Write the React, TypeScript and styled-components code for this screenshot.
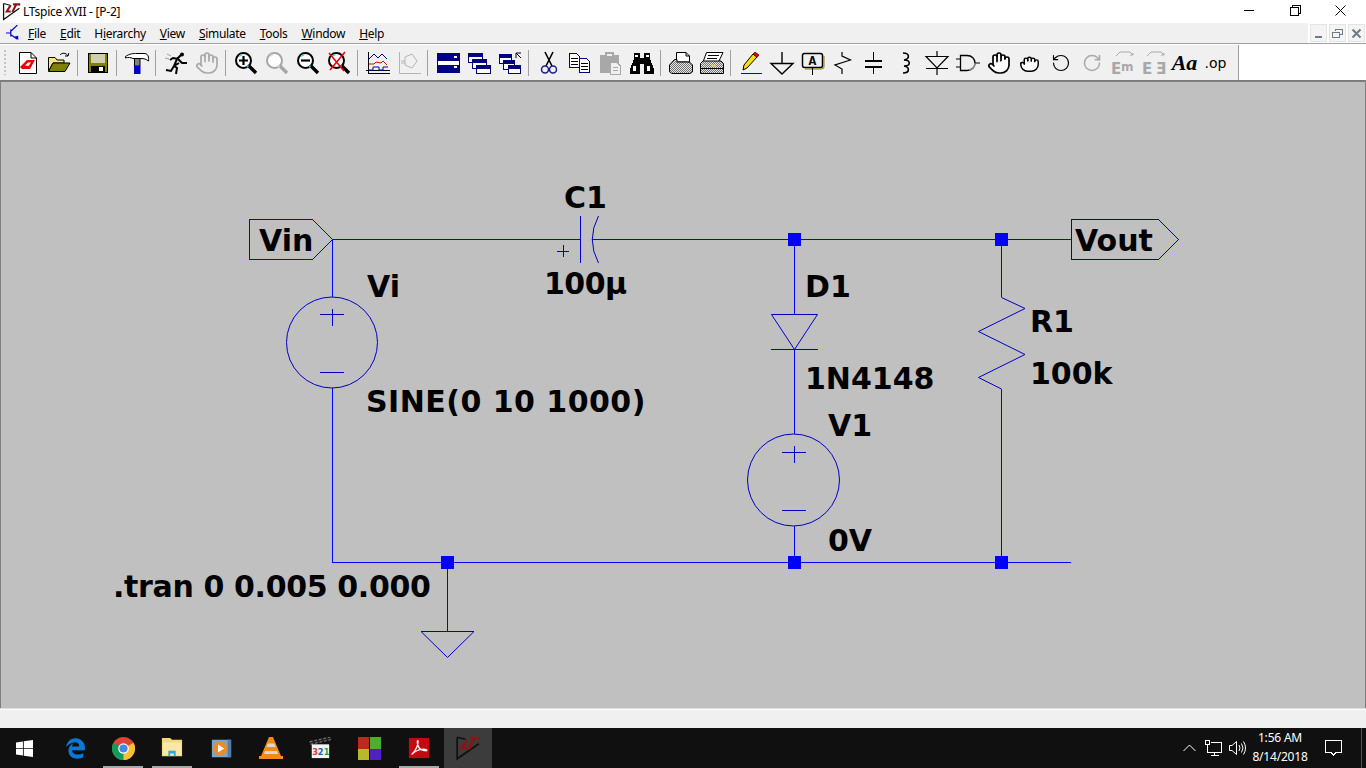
import React from 'react';
import styled, {createGlobalStyle} from "styled-components";
import {Hand, Grab, RotateCcw, RotateCw} from "lucide-react";
import {FaEdgeLegacy} from "react-icons/fa6";

const GlobalStyle = createGlobalStyle`
    html, body {
        margin: 0;
        padding: 0;
        overflow: hidden;
        background: #ffffff;
        font-family: "Noto Sans", "Open Sans", sans-serif;
    }
`

const WIRE = "#0000ff"
const SYMBOL = "#0000c4"

const menuItems = [
    {before: "", key: "F", after: "ile"},
    {before: "", key: "E", after: "dit"},
    {before: "H", key: "i", after: "erarchy"},
    {before: "", key: "V", after: "iew"},
    {before: "", key: "S", after: "imulate"},
    {before: "", key: "T", after: "ools"},
    {before: "", key: "W", after: "indow"},
    {before: "", key: "H", after: "elp"},
]

const labels = [
    {x: 259, y: 251, text: "Vin"},
    {x: 1075, y: 251, text: "Vout"},
    {x: 367, y: 297, text: "Vi"},
    {x: 564, y: 208, text: "C1"},
    {x: 544, y: 294, text: "100µ", tracking: -0.5},
    {x: 366, y: 412, text: "SINE(0 10 1000)", tracking: 0.47},
    {x: 805, y: 297, text: "D1"},
    {x: 805, y: 389, text: "1N4148"},
    {x: 828, y: 436, text: "V1"},
    {x: 828, y: 551, text: "0V"},
    {x: 1030, y: 332, text: "R1"},
    {x: 1030, y: 384, text: "100k"},
    {x: 113, y: 597, text: ".tran 0 0.005 0.000", tracking: -0.35},
]

const junctions = [[794, 239], [1001, 239], [447, 562], [794, 562], [1001, 562]]

const ToolText = styled.span<{$serif?: boolean}>`
    font-family: ${p => p.$serif ? '"Liberation Serif", serif' : '"DejaVu Sans", sans-serif'};
    font-size: ${p => p.$serif ? "22px" : "14px"};
    font-weight: ${p => p.$serif ? 700 : 400};
    font-style: ${p => p.$serif ? "italic" : "normal"};
    color: #000;
    line-height: 24px;
`

const LtLogo = ({size}: {size: number}) => (
    <svg width={size} height={size} viewBox="0 0 24 24">
        <path d="M2 2 L2 22 L22 8" fill="none" stroke="#111" strokeWidth="1.6"/>
        <path d="M2 2 L10 4" fill="none" stroke="#111" strokeWidth="1.4"/>
        <path d="M11 4 L6 12 L11 12 M14 3 L23 3 M18 3 L13 13" fill="none" stroke="#8c1414" strokeWidth="2.6"/>
    </svg>
)

const MagGlass = ({stroke = "#000", children}: {stroke?: string; children?: React.ReactNode}) => (
    <>
        <circle cx="9.5" cy="9.5" r="7.5" fill="#fff" stroke={stroke} strokeWidth="2"/>
        <path d="M5 5 L8 3.5 M15 15 L13 16" stroke={stroke === "#000" ? "#35d0d8" : "#d8d8d8"} strokeWidth="1.4"/>
        <path d="M15 15 L22 22" stroke={stroke} strokeWidth="3.4"/>
        {children}
    </>
)

const MiniWindow = ({x, y, w, h = 7}: {x: number; y: number; w: number; h?: number}) => (
    <g shapeRendering="crispEdges">
        <rect x={x + .5} y={y + .5} width={w} height={h} fill="#fff" stroke="#000080"/>
        <rect x={x + .5} y={y + .5} width={w} height={2.5} fill="#000080" stroke="#000080"/>
    </g>
)

const Sheet = ({x, y}: {x: number; y: number}) => (
    <g shapeRendering="crispEdges">
        <path d={`M${x + .5} ${y + .5} h7 l3 3 v11 h-10 z`} fill="#fff" stroke="#000080"/>
        <path d={`M${x + 2} ${y + 5.5} h7 M${x + 2} ${y + 8.5} h7 M${x + 2} ${y + 11.5} h7`} stroke="#000"/>
    </g>
)

const HandIcon = ({color = "#000", Shape = Hand, size = 24}: {color?: string; Shape?: typeof Hand; size?: number}) => (
    <Shape style={{width: size, height: size}} color={color} fill={color === "#000" ? "#fff" : "none"} strokeWidth={1.7}/>
)

const Dither = ({id}: {id: string}) => (
    <defs>
        <pattern id={id} width="2" height="2" patternUnits="userSpaceOnUse">
            <rect width="2" height="2" fill="#e8e8e8"/>
            <rect width="1" height="1" fill="#707070"/>
            <rect x="1" y="1" width="1" height="1" fill="#707070"/>
        </pattern>
    </defs>
)

const tools: (React.ReactNode | "sep")[] = [
    // new
    <svg viewBox="0 0 24 24" key="new">
        <path d="M3.5 1.5 H15 L20.5 7 V22.5 H3.5 Z" fill="#fff" stroke="#000"/>
        <path d="M15 1.5 V7 H20.5" fill="none" stroke="#000"/>
        <path d="M4 16 L11 9 H19 L14 18 H6 Z" fill="#f00000"/>
        <path d="M9 14.5 L12 11.5 H15 L12.5 15 Z" fill="#fff"/>
    </svg>,
    // open
    <svg viewBox="0 0 24 24" key="open">
        <path d="M1.5 6.5 H8 L10 9 H17 V12 H6 L1.5 20 Z" fill="#f4e87a" stroke="#000"/>
        <path d="M1.5 20.5 L6 12 H23 L18 20.5 Z" fill="#808000" stroke="#000"/>
        <path d="M13 4 C15 1.5 19 1.5 21 5 M21 5 L18 5 M21 5 L21.8 2" fill="none" stroke="#000"/>
    </svg>,
    "sep",
    // save
    <svg viewBox="0 0 24 24" key="save" shapeRendering="crispEdges">
        <rect x="2.5" y="2.5" width="19" height="19" fill="#808000" stroke="#000"/>
        <rect x="5" y="3" width="14" height="9" fill="#cfcfb0"/>
        <rect x="5" y="15" width="14" height="6" fill="#000"/>
        <rect x="13" y="16" width="4" height="4" fill="#fff"/>
    </svg>,
    "sep",
    // hammer
    <svg viewBox="0 0 24 24" key="hammer">
        <path d="M0.5 5.5 C5 2.5 8 2.5 12 2.5 H20 C23 3 24 6 23.5 10 C21 8 19 7.5 16 7.5 H8 C6 6.5 3 6 0.5 7 Z" fill="#fff" stroke="#000"/>
        <path d="M9.5 7.5 H15 V15 H9.5 Z" fill="#808080" stroke="#000"/>
        <rect x="9" y="15" width="6.5" height="8" fill="#0000c8"/>
    </svg>,
    "sep",
    // run
    <svg viewBox="0 0 24 24" key="run">
        <path d="M2 19 L7 20 L10 15 L13 17 L12 23 M10 15 L13 8 M6 9 L9 7 L14 8 L18 12 L23 12 M13 8 L17 4 M10 15 L15 12" fill="none" stroke="#000" strokeWidth="2"/>
        <circle cx="18" cy="3.5" r="2" fill="#000"/>
        <path d="M3 3 L7 5 M1 7 L5 8" stroke="#a0a0a0"/>
    </svg>,
    // hand disabled
    <HandIcon key="hand0" color="#a8a8a8"/>,
    "sep",
    <svg viewBox="0 0 24 24" key="zin">
        <MagGlass><path d="M5 9.5 H14 M9.5 5 V14" stroke="#000" strokeWidth="2.2"/></MagGlass>
    </svg>,
    <svg viewBox="0 0 24 24" key="zfit">
        <MagGlass stroke="#a6a6a6"/>
    </svg>,
    <svg viewBox="0 0 24 24" key="zout">
        <MagGlass><path d="M5 9.5 H14" stroke="#000" strokeWidth="2.2"/></MagGlass>
    </svg>,
    <svg viewBox="0 0 24 24" key="zcancel">
        <MagGlass/>
        <path d="M2 2 L17 20 M18 1 L3 19" stroke="#f00000" strokeWidth="1.6"/>
    </svg>,
    "sep",
    // waveform
    <svg viewBox="0 0 24 24" key="wave">
        <path d="M2.5 1 V22.5 H24 M0 19.5 H24" fill="none" stroke="#000" shapeRendering="crispEdges"/>
        <path d="M3 8 L8 3 L12 7 L16 3 L21 8" fill="none" stroke="#000080"/>
        <path d="M3 13 L8 13 L10 11 L15 12 L17 10 L21 14" fill="none" stroke="#e00000"/>
        <path d="M3 19 H7 V16 H13 V19 H17 V16 H22" fill="none" stroke="#0000d0"/>
    </svg>,
    <svg viewBox="0 0 24 24" key="wavegrey">
        <path d="M2.5 1 V22.5 H24 M8 6 L15 3 L20 10 L15 17 L8 14 Z M4 10 H8 M4 12 H8" fill="none" stroke="#b4b4b4"/>
    </svg>,
    "sep",
    // tile
    <svg viewBox="0 0 24 24" key="tile" shapeRendering="crispEdges">
        <rect x="1.5" y="2.5" width="22" height="19" fill="#fff" stroke="#000080"/>
        <rect x="2" y="3" width="21" height="7" fill="#000080"/>
        <rect x="2" y="14" width="21" height="7" fill="#000080"/>
        <rect x="18" y="5" width="3" height="2" fill="#fff"/>
        <rect x="18" y="15" width="3" height="2" fill="#fff"/>
    </svg>,
    <svg viewBox="0 0 24 24" key="cascade">
        <MiniWindow x={1} y={2} w={14} h={9}/>
        <MiniWindow x={5} y={8} w={14} h={9}/>
        <MiniWindow x={9} y={14} w={14} h={8}/>
    </svg>,
    <svg viewBox="0 0 24 24" key="arrange">
        <MiniWindow x={1} y={3} w={12} h={9}/>
        <MiniWindow x={5} y={9} w={11} h={9}/>
        <MiniWindow x={10} y={14} w={12} h={8}/>
        <path d="M18 2 H23 M18 2 V7 M18 2 L23 7" stroke="#000" fill="none"/>
    </svg>,
    "sep",
    // scissors
    <svg viewBox="0 0 24 24" key="cut">
        <path d="M8 1 L15 15 M16 1 L9 15" stroke="#000" strokeWidth="1.6"/>
        <circle cx="8" cy="18.5" r="3.5" fill="none" stroke="#1c1c90" strokeWidth="1.5"/>
        <circle cx="16" cy="18.5" r="3.5" fill="none" stroke="#1c1c90" strokeWidth="1.5"/>
    </svg>,
    <svg viewBox="0 0 24 24" key="copy">
        <Sheet x={1} y={2}/>
        <Sheet x={11} y={7}/>
    </svg>,
    <svg viewBox="0 0 24 24" key="paste" shapeRendering="crispEdges">
        <rect x="1" y="4" width="19" height="18" fill="#a8a8a8"/>
        <rect x="6" y="1" width="9" height="5" fill="#a8a8a8"/>
        <rect x="8" y="3" width="5" height="2" fill="#f0f0f0"/>
        <path d="M11.5 11.5 H18 L21.5 15 V23.5 H11.5 Z" fill="#f0f0f0" stroke="#a8a8a8"/>
        <path d="M14 16.5 H19 M14 19.5 H19" stroke="#a8a8a8"/>
    </svg>,
    <svg viewBox="0 0 24 24" key="find" shapeRendering="crispEdges">
        <path d="M4 2 H10 V7 H14 V2 H20 V8 L24 18 V23 H14 V13 H10 V23 H0 V18 L4 8 Z" fill="#000"/>
        <rect x="5" y="4" width="3" height="2" fill="#fff"/>
        <rect x="16" y="4" width="3" height="2" fill="#fff"/>
        <rect x="3" y="15" width="3" height="5" fill="#fff"/>
        <rect x="17" y="15" width="3" height="5" fill="#fff"/>
    </svg>,
    "sep",
    // print
    <svg viewBox="0 0 24 24" key="print">
        <Dither id="printDither"/>
        <path d="M7.5 1.5 H17 L20.5 5 V11 H7.5 Z" fill="#fff" stroke="#000"/>
        <path d="M17 1.5 V5 H20.5" fill="none" stroke="#000"/>
        <path d="M5.5 8.5 H8 V11 H20.5 L23.5 14 V20 C23.5 21.5 22 22.5 20 22.5 H4 C2 22.5 .5 21.5 .5 20 V14 Z" fill="url(#printDither)" stroke="#000"/>
    </svg>,
    <svg viewBox="0 0 24 24" key="printer">
        <Dither id="printerDither"/>
        <path d="M6.5 1.5 H23 L18.5 11 H3 Z" fill="#fff" stroke="#000"/>
        <path d="M8 4.5 H19 M7 7.5 H17" stroke="#000"/>
        <path d="M.5 12.5 L3 10 H21 L23.5 12.5 V22.5 H.5 Z" fill="url(#printerDither)" stroke="#000"/>
        <path d="M.5 17.5 H23.5" stroke="#000"/>
        <rect x="11" y="13.5" width="5" height="2" fill="#e8d040"/>
    </svg>,
    "sep",
    // pencil
    <svg viewBox="0 0 24 24" key="pencil">
        <path d="M8 17 L4 19 L5 14 L14 3 L18 6 Z" fill="#f8e000" stroke="#000"/>
        <path d="M14 3 L16 1 L20 4 L18 6.5 Z" fill="#f00000" stroke="#000" strokeWidth=".6"/>
        <path d="M2 22.5 H23" stroke="#0000e0" shapeRendering="crispEdges"/>
    </svg>,
    // ground
    <svg viewBox="0 0 24 24" key="ground">
        <path d="M12 1 V12 M1 12.5 H23 L12 23 Z" fill="none" stroke="#000" strokeWidth="1.4"/>
    </svg>,
    // label
    <svg viewBox="0 0 24 24" key="label">
        <rect x="1.5" y="2.5" width="20" height="14" rx="2" fill="none" stroke="#000" strokeWidth="1.5"/>
        <path d="M23 5 V16 Q23 18 20 18 H4" fill="none" stroke="#808000"/>
        <text x="11.5" y="14" textAnchor="middle" fontFamily="Liberation Mono" fontWeight="700" fontSize="13">A</text>
        <path d="M11.5 17 V24" stroke="#000" shapeRendering="crispEdges"/>
    </svg>,
    // resistor
    <svg viewBox="0 0 24 24" key="res">
        <path d="M10 1 V5 L18.5 9 L3 14 L10 18 V23" fill="none" stroke="#000" strokeWidth="1.2"/>
    </svg>,
    // capacitor
    <svg viewBox="0 0 24 24" key="cap" shapeRendering="crispEdges">
        <path d="M10.5 1 V9 M10.5 17 V23" stroke="#000"/>
        <rect x="2" y="9" width="17" height="2" fill="#000"/>
        <rect x="2" y="15" width="17" height="2" fill="#000"/>
    </svg>,
    // inductor
    <svg viewBox="0 0 24 24" key="ind">
        <path d="M9 2 C16 2 16 8 10 9 C17 9 17 15 10 15 C16 16 16 22 9 22" fill="none" stroke="#000" strokeWidth="1.6"/>
    </svg>,
    // diode
    <svg viewBox="0 0 24 24" key="diode">
        <path d="M12 0 V5 M1 5.5 H23 L12 17 Z M1 17.5 H23 M12 17 V24" fill="none" stroke="#000" strokeWidth="1.2"/>
    </svg>,
    // gate
    <svg viewBox="0 0 24 24" key="gate">
        <path d="M0 8 H4 M0 16 H4 M19 12 H24" stroke="#000"/>
        <path d="M4.5 4.5 H11 C16 4.5 19 8 19 12 C19 16 16 19.5 11 19.5 H4.5 Z" fill="none" stroke="#000" strokeWidth="1.3"/>
        <path d="M13 19 C17 18 19 15 19 12" fill="none" stroke="#909090" strokeWidth="1.3"/>
    </svg>,
    <HandIcon key="hand1"/>,
    <HandIcon key="hand2" Shape={Grab} size={21}/>,
    <RotateCcw key="undo" style={{width: 20, height: 20}} color="#000" strokeWidth={1.4}/>,
    <RotateCw key="redo" style={{width: 20, height: 20}} color="#a8a8a8" strokeWidth={1.8}/>,
    // duplicate / move label
    <svg viewBox="0 0 24 24" key="em">
        <path d="M5 5 L9 1 H19 L22 4 M22 4 H19 M22 4 V2" fill="none" stroke="#a8a8a8"/>
        <text x="0" y="23" fontFamily="DejaVu Sans" fontWeight="700" fontSize="15" fill="#a8a8a8">E</text>
        <text x="10" y="20" fontFamily="DejaVu Sans" fontWeight="700" fontSize="12" fill="#a8a8a8">m</text>
    </svg>,
    <svg viewBox="0 0 24 24" key="ee">
        <path d="M5 5 L9 1 H19 L22 4 M22 4 H19 M22 4 V2" fill="none" stroke="#a8a8a8"/>
        <text x="0" y="23" fontFamily="DejaVu Sans" fontWeight="700" fontSize="15" fill="#a8a8a8">E</text>
        <text x="14" y="23" fontFamily="DejaVu Sans" fontWeight="700" fontSize="15" fill="#a8a8a8">Ǝ</text>
    </svg>,
    <ToolText key="aa" $serif>Aa</ToolText>,
    <ToolText key="op">.op</ToolText>,
]

const Schematic = () => (
    <SheetView width="1366" height="627" viewBox="0 81 1366 627">
        <g fill="none" stroke={WIRE} shapeRendering="crispEdges">
            <path d="M332.5 239.5 H580 M592 239.5 H1071"/>
            <path d="M332.5 239.5 V297 M332.5 388 V562.5 H1071"/>
            <path d="M794.5 239.5 V314 M794.5 349 V434 M794.5 526 V562"/>
            <path d="M1001.5 239.5 V297 M1001.5 389 V562"/>
            <path d="M447.5 562 V631"/>
        </g>
        <g fill="none" stroke={SYMBOL}>
            <path d="M249.5 219.5 H312.5 L332.5 239.5 L312.5 259.5 H249.5 Z" stroke={WIRE} shapeRendering="crispEdges"/>
            <path d="M1071.5 219.5 H1158.5 L1178.5 239.5 L1158.5 259.5 H1071.5 Z" shapeRendering="crispEdges"/>
            <path d="M580.5 216 V263" shapeRendering="crispEdges"/>
            <path d="M598.5 216 Q586 239.5 598.5 263"/>
            <path d="M557 251.5 H569 M563.5 245 V257" shapeRendering="crispEdges"/>
            <circle cx="332" cy="342.5" r="45.5"/>
            <path d="M320 314.5 H344 M332.5 309 V326 M320 372.5 H344" shapeRendering="crispEdges"/>
            <circle cx="793.5" cy="480" r="46"/>
            <path d="M782 452.5 H806 M794.5 446 V463 M782 510.5 H806" shapeRendering="crispEdges"/>
            <path d="M771.5 314.5 H817.5 L794.5 349.5 Z"/>
            <path d="M771 349.5 H818" shapeRendering="crispEdges"/>
            <path d="M1001.5 297.5 L1025 308.5 L978.5 331.5 L1025 354.5 L978.5 377.5 L1001.5 389"/>
            <path d="M421 631.5 H474 L447.5 657.5 Z"/>
        </g>
        <g fill={WIRE} shapeRendering="crispEdges">
            {junctions.map(([x, y]) => <rect key={`${x}-${y}`} x={x - 6} y={y - 6} width="13" height="13"/>)}
        </g>
        {labels.map(label => (
            <NetLabel key={label.text} x={label.x} y={label.y} $tracking={label.tracking ?? 0}>{label.text}</NetLabel>
        ))}
    </SheetView>
)

const taskIcons = [
    <svg viewBox="0 0 24 24" key="chrome" width="23" height="23">
        <circle cx="12" cy="12" r="12" fill="#dc4437"/>
        <path d="M12 12 L1.6 6 A12 12 0 0 0 12 24 Z" fill="#0f9d58"/>
        <path d="M12 12 L12 24 A12 12 0 0 0 22.4 6 Z" fill="#fbc02d"/>
        <circle cx="12" cy="12" r="5.5" fill="#fff"/>
        <circle cx="12" cy="12" r="4.3" fill="#4a86e8"/>
    </svg>,
    <svg viewBox="0 0 24 24" key="folder" width="22" height="22">
        <path d="M1 1 H10 L12 3 H23 V21 H1 Z" fill="#f6d77a"/>
        <rect x="2" y="6" width="20" height="14" fill="#fbe8a6"/>
        <path d="M8 21 V15 H16 V21 H14 V18 H10 V21 Z" fill="#29a8e6"/>
    </svg>,
    <svg viewBox="0 0 24 24" key="media" width="21" height="21">
        <rect x="1" y="2" width="22" height="20" fill="#7aa6cc"/>
        <rect x="19" y="2" width="4" height="20" fill="#4f7fa8"/>
        <circle cx="10.5" cy="12" r="8" fill="#f08a24"/>
        <path d="M8 7.5 L15 12 L8 16.5 Z" fill="#fff"/>
    </svg>,
    <svg viewBox="0 0 24 24" key="vlc" width="24" height="24">
        <path d="M10 1 H14 L22 20 H24 V23 H0 V20 H2 Z" fill="#f08a18"/>
        <path d="M8.6 7.5 H15.4 L16.6 11 H7.4 Z M6 15 H18 L19 18 H5 Z" fill="#d8d8d8"/>
    </svg>,
    <svg viewBox="0 0 24 24" key="clapper" width="22" height="22">
        <path d="M1 5 L23 0 L23.5 3 L1.5 8 Z" fill="#222" stroke="#ddd" strokeWidth=".6" strokeDasharray="3 2"/>
        <rect x="3" y="8" width="19" height="15" fill="#f4f4f4"/>
        <text x="3.5" y="20" fontFamily="DejaVu Sans" fontWeight="700" fontSize="9" fill="#d04020">3</text>
        <text x="9.5" y="20" fontFamily="DejaVu Sans" fontWeight="700" fontSize="9" fill="#2060c0">2</text>
        <text x="16" y="20" fontFamily="DejaVu Sans" fontWeight="700" fontSize="9" fill="#20a040">1</text>
    </svg>,
    <svg viewBox="0 0 24 24" key="squares" width="23" height="23" shapeRendering="crispEdges">
        <rect x="0" y="0" width="11.5" height="12" fill="#b82c20"/>
        <rect x="12.5" y="0" width="11.5" height="12" fill="#4cae2c"/>
        <rect x="0" y="13" width="11.5" height="11" fill="#b8b82c"/>
        <rect x="12.5" y="13" width="11.5" height="11" fill="#5020c0"/>
    </svg>,
    <svg viewBox="0 0 24 24" key="acrobat" width="22" height="22">
        <rect x="1" y="1" width="22" height="22" fill="#c40a10"/>
        <path d="M4 19 C8 16 11 9 11 5 C11 3 9.5 4 10.5 8 C11.5 12 15 15 20 15 C22 14 19 13 15 13.5 C11 14 7 16 4 19 Z" fill="none" stroke="#fff" strokeWidth="1.4"/>
    </svg>,
]

// which task buttons have a running app under them
const runningIcons = ["chrome", "folder", "acrobat"]

export default function App() {
    return (
        <>
            <GlobalStyle/>
            <AppWindow>
                <TitleBar>
                    <TitleIcon><LtLogo size={19}/></TitleIcon>
                    <TitleText>LTspice XVII - [P-2]</TitleText>
                    <WindowControls>
                        <WindowButton>
                            <svg width="11" height="11"><path d="M0 5.5 H10" stroke="#000" shapeRendering="crispEdges"/></svg>
                        </WindowButton>
                        <WindowButton>
                            <svg width="11" height="11"><path d="M.5 2.5 H8.5 V10.5 H.5 Z M2.5 2 V.5 H10.5 V8.5 H9" fill="none" stroke="#000" shapeRendering="crispEdges"/></svg>
                        </WindowButton>
                        <WindowButton>
                            <svg width="11" height="11"><path d="M.5 .5 L10.5 10.5 M10.5 .5 L.5 10.5" stroke="#000"/></svg>
                        </WindowButton>
                    </WindowControls>
                </TitleBar>
                <MenuBar>
                    <MenuIcon>
                        <svg width="16" height="18" viewBox="0 0 16 18">
                            <path d="M5.5 5 V13 M5 9 H0 M13 0 L5.5 7 M5.5 11 L13 16" fill="none" stroke="#0000e0" strokeWidth="1.4"/>
                            <path d="M10 13 L14 17 L14 12 Z" fill="#0000e0"/>
                        </svg>
                    </MenuIcon>
                    {menuItems.map((item, i) => (
                        <MenuItem key={i}>{item.before}<u>{item.key}</u>{item.after}</MenuItem>
                    ))}
                    <ChildControls>
                        <ChildButton>
                            <svg width="11" height="11"><rect x="2" y="8" width="7" height="2" fill="#6d7a8a"/></svg>
                        </ChildButton>
                        <ChildButton>
                            <svg width="11" height="11"><path d="M.5 4.5 H7.5 V9.5 H.5 Z M3.5 3 V1.5 H10.5 V6.5 H8" fill="none" stroke="#6d7a8a" shapeRendering="crispEdges"/></svg>
                        </ChildButton>
                        <ChildButton>
                            <svg width="11" height="11"><path d="M1.5 1.5 L9.5 9.5 M9.5 1.5 L1.5 9.5" stroke="#6d7a8a" strokeWidth="2"/></svg>
                        </ChildButton>
                    </ChildControls>
                </MenuBar>
                <ToolRow>
                    <Toolbar>
                        <Gripper/>
                        {tools.map((tool, i) => tool === "sep"
                            ? <ToolSeparator key={i}/>
                            : <ToolButton key={i}>{tool}</ToolButton>)}
                    </Toolbar>
                </ToolRow>
                <Canvas>
                    <Schematic/>
                </Canvas>
                <StatusBar/>
                <Taskbar>
                    <StartButton>
                        <svg viewBox="0 0 24 24" width="17" height="17">
                            <path d="M0 3.4 L9.8 2 V11.5 H0 Z M11 1.8 L24 0 V11.5 H11 Z M0 12.7 H9.8 V22 L0 20.6 Z M11 12.7 H24 V24 L11 22.2 Z" fill="#fff"/>
                        </svg>
                    </StartButton>
                    <EdgeButton>
                        <FaEdgeLegacy size={21} color="#0a78d7"/>
                    </EdgeButton>
                    <TaskButtons>
                        {taskIcons.map(icon => (
                            <TaskButton key={icon.key} $running={runningIcons.includes(String(icon.key))}>{icon}</TaskButton>
                        ))}
                        <TaskButton $active><LtLogo size={26}/></TaskButton>
                    </TaskButtons>
                    <Tray>
                        <TrayIcon>
                            <svg width="13" height="8"><path d="M.5 7 L6.5 1 L12.5 7" fill="none" stroke="#fff"/></svg>
                        </TrayIcon>
                        <TrayIcon>
                            <svg width="17" height="16" shapeRendering="crispEdges">
                                <path d="M.5 .5 H4.5 V4.5 H.5 Z M2.5 4.5 V12.5 H16.5 M6 2.5 H16.5 V12.5 M9.5 12.5 V15 M6 15.5 H14" fill="none" stroke="#fff"/>
                            </svg>
                        </TrayIcon>
                        <TrayIcon>
                            <svg width="17" height="14">
                                <path d="M.5 4.5 H3 L7.5 .5 V13.5 L3 9.5 H.5 Z" fill="none" stroke="#fff"/>
                                <path d="M10 4 Q12 7 10 10 M12.5 2.5 Q15.5 7 12.5 11.5 M14.5 .5 Q18.5 7 14.5 13.5" fill="none" stroke="#fff"/>
                            </svg>
                        </TrayIcon>
                        <Clock>
                            <span>1:56 AM</span>
                            <span>8/14/2018</span>
                        </Clock>
                        <NotifyButton>
                            <svg width="17" height="16"><path d="M.5 .5 H16.5 V12.5 H11 L8.5 15 L6 12.5 H.5 Z" fill="none" stroke="#fff" shapeRendering="crispEdges"/></svg>
                        </NotifyButton>
                        <DesktopPeek/>
                    </Tray>
                </Taskbar>
            </AppWindow>
        </>
    );
}

const AppWindow = styled.div`
    width: 1366px;
    height: 768px;
    display: flex;
    flex-direction: column;
    overflow: hidden;
`

const TitleBar = styled.div`
    height: 23px;
    flex: none;
    display: flex;
    align-items: center;
    background: #ffffff;
`

const TitleIcon = styled.div`
    width: 23px;
    height: 23px;
    display: flex;
    align-items: center;
    justify-content: center;
`

const TitleText = styled.span`
    font-size: 12px;
    letter-spacing: -0.25px;
    color: #000;
`

const WindowControls = styled.div`
    margin-left: auto;
    display: flex;
    height: 23px;
    box-sizing: border-box;
    padding: 0 2.5px 2px 0;
`

const WindowButton = styled.div`
    width: 45.5px;
    display: flex;
    align-items: center;
    justify-content: center;
`

const MenuBar = styled.div`
    height: 20px;
    flex: none;
    display: flex;
    align-items: center;
    gap: 14px;
    background: #f0f0f0;
`

const MenuIcon = styled.div`
    width: 14px;
    margin-left: 6px;
    margin-right: -6px;
    display: flex;
`

const MenuItem = styled.span`
    font-size: 12px;
    letter-spacing: -0.3px;
    color: #000;
    white-space: nowrap;
`

const ChildControls = styled.div`
    margin-left: auto;
    height: 20px;
    padding: 1px 1px 1px 2px;
    box-sizing: border-box;
    display: flex;
    gap: 2px;
    background: #fff;
`

const ChildButton = styled.div`
    width: 17px;
    box-sizing: border-box;
    display: flex;
    align-items: center;
    justify-content: center;
    background: #f4f4f4;
    border: 1px solid #e4e4e4;
`

const ToolRow = styled.div`
    height: 38px;
    flex: none;
    box-sizing: border-box;
    display: flex;
    background: #fff;
    border-top: 1px solid #a0a0a0;
    border-bottom: 1px solid #7a7a7a;
`

const Toolbar = styled.div`
    width: 1239px;
    box-sizing: border-box;
    display: flex;
    align-items: center;
    padding-left: 12px;
    position: relative;
    background: #f0f0f0;
    border-right: 1px solid #a0a0a0;
    margin-top: 1px;
`

const Gripper = styled.div`
    position: absolute;
    left: 4px;
    top: 5px;
    bottom: 5px;
    width: 2px;
    background: repeating-linear-gradient(#c4c4c4 0 2px, transparent 2px 4px);
`

const ToolButton = styled.div`
    width: 31px;
    height: 24px;
    flex: none;
    display: flex;
    align-items: center;
    justify-content: center;

    svg {
        width: 24px;
        height: 24px;
        overflow: visible;
    }
`

const ToolSeparator = styled.div`
    width: 8px;
    height: 26px;
    flex: none;
    position: relative;

    &::after {
        content: "";
        position: absolute;
        left: 3px;
        top: 0;
        bottom: 0;
        width: 1px;
        background: #a0a0a0;
    }
`

const Canvas = styled.div`
    height: 627px;
    flex: none;
    background: #c0c0c0;
    box-shadow: inset 1px 1px 0 #808080, inset -1px 0 0 #808080;
`

const SheetView = styled.svg`
    display: block;
`

const NetLabel = styled.text<{$tracking: number}>`
    font-family: "DejaVu Sans", sans-serif;
    font-weight: 700;
    font-size: 30px;
    letter-spacing: ${p => p.$tracking}px;
    fill: #000;
`

const StatusBar = styled.div`
    height: 20px;
    flex: none;
    box-sizing: border-box;
    background: #f0f0f0;
    border-top: 1px solid #dcdcdc;
    box-shadow: inset 0 1px 0 #fff;
`

const Taskbar = styled.div`
    height: 40px;
    flex: none;
    display: flex;
    background: #101010;
`

const StartButton = styled.div`
    width: 48px;
    flex: none;
    display: flex;
    align-items: center;
    justify-content: center;
`

const EdgeButton = styled(StartButton)`
    width: 54px;
    margin-right: -3px;
`

const TaskButtons = styled.div`
    display: flex;
    gap: 1.25px;
`

const TaskButton = styled.div<{$active?: boolean; $running?: boolean}>`
    width: 48px;
    flex: none;
    display: flex;
    align-items: center;
    justify-content: center;
    position: relative;
    background: ${p => p.$active ? "#3c3c3c" : "transparent"};

    &::after {
        content: "";
        display: ${p => p.$running ? "block" : "none"};
        position: absolute;
        bottom: 0;
        left: 4px;
        right: 4px;
        height: 2px;
        background: #a8a8a8;
    }
`

const Tray = styled.div`
    margin-left: auto;
    display: flex;
    align-items: center;
    padding-right: 4px;
`

const TrayIcon = styled.div`
    width: 24px;
    display: flex;
    justify-content: center;
`

const Clock = styled.div`
    width: 62px;
    margin-top: -2px;
    display: flex;
    flex-direction: column;
    align-items: center;
    color: #fff;
    font-size: 12px;
    letter-spacing: -0.2px;
    line-height: 19px;
`

const NotifyButton = styled.div`
    width: 44px;
    display: flex;
    justify-content: center;
`

const DesktopPeek = styled.div`
    width: 1px;
    height: 40px;
    margin-left: 6px;
    background: #555555;
`
